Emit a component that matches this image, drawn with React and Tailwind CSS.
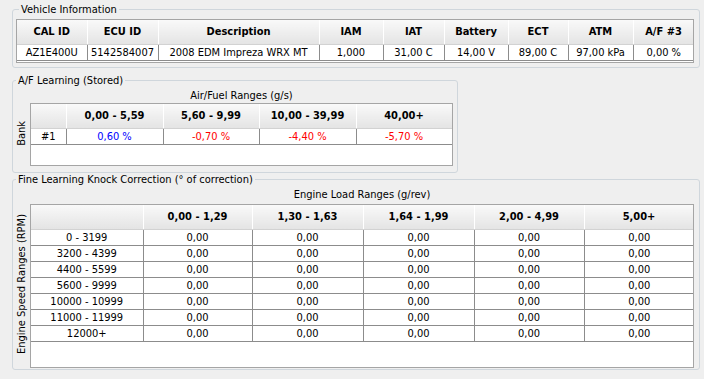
import React from "react";

const FONT = "font-['DejaVu_Sans_Condensed','Liberation_Sans',sans-serif] [font-stretch:condensed]";

function Group({ title, className, children }) {
  return (
    <fieldset className={`border border-[#cfd6dc] rounded-[3px] ${className}`}>
      <legend className="ml-[3px] px-[2px] text-[11px] leading-[13px] text-black">{title}</legend>
      {children}
    </fieldset>
  );
}

const HeadCell = ({ children, w }) => (
  <th
    className="h-[24px] p-0 text-[11px] font-bold text-black text-center bg-gradient-to-b from-[#f9f9f9] to-[#e4e4e4] border-r border-r-white border-b border-b-[#d2d2d2]"
    style={{ width: w }}
  >
    {children}
  </th>
);

const BodyCell = ({ children, color = "text-black", last }) => (
  <td
    className={`p-0 text-[11px] text-center leading-[15px] h-[16px] border-b border-[#8c8c8c] ${last ? "" : "border-r"} ${color}`}
  >
    {children}
  </td>
);

export default function App() {
  const vehHead = [
    ["CAL ID", 70],
    ["ECU ID", 71],
    ["Description", 161],
    ["IAM", 64],
    ["IAT", 61],
    ["Battery", 64],
    ["ECT", 60],
    ["ATM", 65],
    ["A/F #3", 61],
  ];
  const vehRow = ["AZ1E400U", "5142584007", "2008 EDM Impreza WRX MT", "1,000", "31,00 C", "14,00 V", "89,00 C", "97,00 kPa", "0,00 %"];

  const afHead = [["", 35], ["0,00 - 5,59", 97], ["5,60 - 9,99", 96], ["10,00 - 39,99", 97], ["40,00+", 96]];
  const afRow = [
    ["#1", "text-black"],
    ["0,60 %", "text-[#0000ff]"],
    ["-0,70 %", "text-[#ff0000]"],
    ["-4,40 %", "text-[#ff0000]"],
    ["-5,70 %", "text-[#ff0000]"],
  ];

  const knHead = [["", 112], ["0,00 - 1,29", 109], ["1,30 - 1,63", 111], ["1,64 - 1,99", 111], ["2,00 - 4,99", 110], ["5,00+", 110]];
  const knRows = ["0 - 3199", "3200 - 4399", "4400 - 5599", "5600 - 9999", "10000 - 10999", "11000 - 11999", "12000+"];

  return (
    <div className={`w-[704px] h-[379px] bg-[#efefef] pt-[3px] pl-[12px] flex flex-col ${FONT}`}>
      <Group title="Vehicle Information" className="w-[688px] pl-[3px] pb-[4px]">
        <div className="mt-[3px] w-[678px] h-[44px] bg-white border border-[#a5a5a5] overflow-hidden">
          <table className="border-collapse table-fixed w-[677px]">
            <thead>
              <tr>
                {vehHead.map(([h, w]) => (
                  <HeadCell key={h} w={w}>{h}</HeadCell>
                ))}
              </tr>
            </thead>
            <tbody>
              <tr>
                {vehRow.map((v, i) => (
                  <BodyCell key={i} last={i === vehRow.length - 1}>{v}</BodyCell>
                ))}
              </tr>
            </tbody>
          </table>
        </div>
      </Group>

      <Group title="A/F Learning (Stored)" className="mt-[6px] w-[446px] pb-[6px]">
        <div className="flex">
          <div className="w-[17px] flex items-end justify-center pb-[20px]">
            <span className="[writing-mode:vertical-rl] rotate-180 text-[11px] leading-[13px] text-black">Bank</span>
          </div>
          <div className="flex flex-col">
            <div className="text-[11px] leading-[13px] text-black text-center h-[16px] pt-[2px]">Air/Fuel Ranges (g/s)</div>
            <div className="w-[423px] h-[63px] bg-white border border-[#a5a5a5] overflow-hidden">
              <table className="border-collapse table-fixed w-[421px]">
                <thead>
                  <tr>
                    {afHead.map(([h, w], i) => (
                      <HeadCell key={i} w={w}>{h}</HeadCell>
                    ))}
                  </tr>
                </thead>
                <tbody>
                  <tr>
                    {afRow.map(([v, c], i) => (
                      <BodyCell key={i} color={c}>{v}</BodyCell>
                    ))}
                  </tr>
                </tbody>
              </table>
            </div>
          </div>
        </div>
      </Group>

      <Group title="Fine Learning Knock Correction (° of correction)" className="mt-0 w-[688px] pb-[1px]">
        <div className="flex">
          <div className="w-[17px] flex items-end justify-center pb-[14px]">
            <span className="[writing-mode:vertical-rl] rotate-180 text-[11px] leading-[13px] text-black whitespace-nowrap">Engine Speed Ranges (RPM)</span>
          </div>
          <div className="flex flex-col">
            <div className="text-[11px] leading-[13px] text-black text-center h-[18px] pt-[2px]">Engine Load Ranges (g/rev)</div>
            <div className="w-[664px] h-[164px] bg-white border border-[#a5a5a5] overflow-hidden">
              <table className="border-collapse table-fixed w-[663px]">
                <thead>
                  <tr>
                    {knHead.map(([h, w], i) => (
                      <HeadCell key={i} w={w}>{h}</HeadCell>
                    ))}
                  </tr>
                </thead>
                <tbody>
                  {knRows.map((r) => (
                    <tr key={r}>
                      <BodyCell>{r}</BodyCell>
                      {[0, 1, 2, 3, 4].map((j) => (
                        <BodyCell key={j} last={j === 4}>0,00</BodyCell>
                      ))}
                    </tr>
                  ))}
                </tbody>
              </table>
            </div>
          </div>
        </div>
      </Group>
    </div>
  );
}
